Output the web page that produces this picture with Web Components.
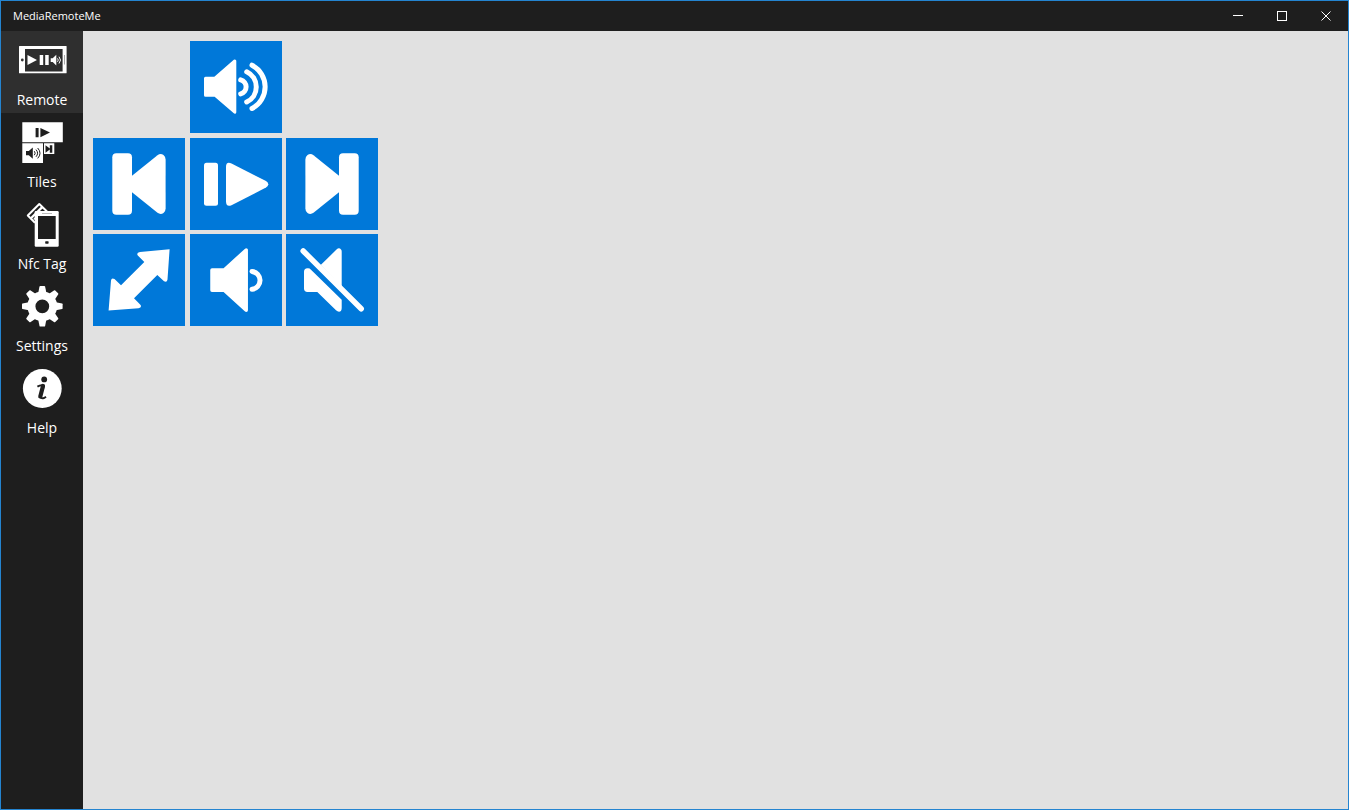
<!DOCTYPE html>
<html lang="en">
<head>
<meta charset="utf-8">
<meta name="viewport" content="width=device-width, initial-scale=1">
<title>MediaRemoteMe</title>
<style>
  html, body { margin: 0; height: 100%; }
  body { font-family: "Open Sans", "Noto Sans", sans-serif; background: #e1e1e1; }
</style>
</head>
<body>
<media-app></media-app>

<script>
const ICONS = {
  // navigation icons, 50 x 48
  remote: `<rect x="2" y="10" width="47.600" height="27.300" rx=".6" fill="#fff"/><rect x="8" y="13" width="37.600" height="22.500" fill="#2d2d2d"/>
    <circle cx="5.300" cy="24" r="1.400" fill="#333"/><path d="M47.500 19v9.500" stroke="#aaa"/>
    <path d="M10.500 19l9.500 5-9.500 5zM22.700 19h3.500v10h-3.500zM28.200 19h3.500v10h-3.500zM33.700 22.200h2l3.600-3.400v10.600l-3.600-3.500h-2z" fill="#fff"/>
    <path d="M40.500 22.400q1.500 1.600 0 3.400M42 20.700q3 3.300 0 6.800" stroke="#fff" fill="none"/>`,
  tiles: `<path d="M5.300 4.300h40.500v20H5.300zM5.300 25.300H26V45H5.300zM27 25.300h10.300V36H27z" fill="#fff"/>
    <path d="M18.600 10h3v9.300h-3zM23.400 10l9.600 4.600-9.600 4.700zM9 33h2.800l4-3.500v11.200l-4-3.500H9zM28.500 27.200l4.300 3.200v-3.200h2.500v7.600h-2.500v-3.200l-4.300 3.200z" fill="#1e1e1e"/>
    <path d="M17.300 33.200q1.800 2 0 4M19 31.600q3.200 3.600 0 7.200M20.700 30q4.600 5.200 0 10.400" stroke="#1e1e1e" fill="none"/>`,
  nfc: `<g fill="none" stroke="#fff"><path d="M18 22.700L10.800 15.500L22.300 4L30 11.500" stroke-width="2" stroke-linejoin="round"/><path d="M14.200 18L25.500 6.900" stroke-width="2.400"/><path d="M16.700 19.400l2-2" stroke-width="1.400"/></g>
    <rect x="17.700" y="11" width="24" height="35.700" rx="1.200" fill="#fff"/><rect x="21" y="16" width="17.700" height="23" fill="#1e1e1e"/>
    <path d="M25 13.500h10" stroke="#bbb"/><rect x="28.200" y="41.200" width="3.400" height="2.500" rx=".6" fill="#1e1e1e"/>`,
  settings: `<defs><path id="tooth" d="M21 12L22.500 4.500Q22.700 4 23.300 4h4q.6 0 .8.500L29.600 12z"/></defs>
    <g fill="#fff"><use href="#tooth"/><use href="#tooth" transform="rotate(45 25.300 24.300)"/><use href="#tooth" transform="rotate(90 25.300 24.300)"/><use href="#tooth" transform="rotate(135 25.300 24.300)"/>
    <use href="#tooth" transform="rotate(180 25.300 24.300)"/><use href="#tooth" transform="rotate(225 25.300 24.300)"/><use href="#tooth" transform="rotate(270 25.300 24.300)"/><use href="#tooth" transform="rotate(315 25.300 24.300)"/></g>
    <circle cx="25.300" cy="24.300" r="10.900" fill="none" stroke="#fff" stroke-width="8"/>`,
  // the info mark: a dot over a slanted stem with curled ends
  help: `<circle cx="25.300" cy="24.500" r="19.400" fill="#fff"/><circle cx="27.200" cy="15.400" r="2.900" fill="#1e1e1e"/>
    <path d="M20.400 22.600Q23.500 20.700 26.600 21.400Q26.700 23.500 25.400 26.500Q23.400 31.500 24.200 33.600Q25.500 35.400 29 32.800" fill="none" stroke="#1e1e1e" stroke-width="2"/>
    <path d="M26 22L23.300 32.500" stroke="#1e1e1e" stroke-width="4.200" stroke-linecap="round"/>`,
  // remote control icons, 92 x 92
  volumeUp: `<path d="M15.500 37.200H25L44.800 20V71.200L25 54.200H15.500z" fill="#fff" stroke="#fff" stroke-width="3" stroke-linejoin="round"/>
    <g fill="none" stroke="#fff" stroke-width="5" stroke-linecap="round"><path d="M50.700 38.800A7.300 7.300 0 0 1 50.700 52.900"/><path d="M56.700 30.800A16.700 16.700 0 0 1 56.700 61"/><path d="M62 24.200A24.400 24.400 0 0 1 62 67.500"/></g>`,
  previous: `<rect x="19.300" y="15.300" width="19.700" height="61.400" rx="4" fill="#fff"/>
    <path d="M39 37.700L64.500 17.200Q67.500 15 70.500 17Q72.600 18.700 72.600 21.500V70.500Q72.600 73.500 70.500 75Q67.500 77 64.500 74.800L39 54.300z" fill="#fff"/>`,
  playPause: `<rect x="14" y="24.700" width="14" height="43" rx="2.500" fill="#fff"/>
    <path d="M36 29Q36 23.200 41.500 25.500L76 43Q80.600 46.200 76 49.500L41.500 67.200Q36 69.200 36 63.500z" fill="#fff"/>`,
  next: `<rect x="53" y="15.300" width="19.700" height="61.400" rx="4" fill="#fff"/>
    <path d="M53 37.700L27.500 17.200Q24.500 15 21.500 17Q19.400 18.700 19.400 21.500V70.500Q19.400 73.500 21.500 75Q24.500 77 27.500 74.800L53 54.300z" fill="#fff"/>`,
  fullscreen: `<path d="M76.600 15.300L47 18Q43 18.500 44.800 21.500L51.300 28L28 51.300L21.500 45Q18.500 43.300 18 46.500L15.600 76.600L45.500 74.300Q49 73.700 47.600 71L41 64.300L64.300 41L71 47.300Q74 48.800 74.500 45.500z" fill="#fff"/>`,
  volumeDown: `<path d="M22 36H34.200L56.200 16V76.300L34.200 56.300H22z" fill="#fff" stroke="#fff" stroke-width="3.500" stroke-linejoin="round"/>
    <path d="M62 37.400A9 9 0 0 1 62 55.300" fill="none" stroke="#fff" stroke-width="5" stroke-linecap="round"/>`,
  mute: `<path d="M17.200 17L75.200 74.800" stroke="#fff" stroke-width="5.500" stroke-linecap="round"/>
    <path d="M34.700 31L50.500 15.600Q53 13.200 55 15.400Q55.700 16 55.700 17.500V53zM18 38Q18 34.300 21.500 34.300Q23.500 34 25 35.700L55.700 65.700V74Q55.700 77.500 53 77.700Q51.500 77.700 50 76.300L31.300 57.900H21.500Q18 57.900 18 54.500z" fill="#fff"/>`,
  // caption icons, 12 x 12
  minimize: `<path d="M1 5.500h10" stroke="#fff"/>`,
  maximize: `<rect x="1.500" y="1.500" width="9" height="9" fill="none" stroke="#fff"/>`,
  close: `<path d="M1.500 1.500l9 9M10.500 1.500l-9 9" stroke="#fff"/>`
};

const svg = (name, w, h) =>
  `<svg width="${w}" height="${h}" viewBox="0 0 ${w} ${h}" aria-hidden="true">${ICONS[name]}</svg>`;

const base = `* { box-sizing: border-box; }
  button { margin: 0; padding: 0; border: 0; font: inherit; color: inherit; background: none; cursor: pointer; }
  svg { display: block; }`;

class WindowTitle extends HTMLElement {
  connectedCallback() {
    this.attachShadow({ mode: 'open' }).innerHTML = `<style>${base}
      :host { display: flex; align-items: stretch; justify-content: space-between; height: 30px; background: #1e1e1e; color: #fff; }
      h1 { margin: 0; padding-left: 12px; font-size: 11px; line-height: 30px; font-weight: 400; }
      .controls { display: flex; }
      button { width: 44px; display: grid; place-items: center; }
      button:hover { background: #333; }
    </style><h1><slot></slot></h1>
    <div class="controls">
      <button aria-label="Minimize">${svg('minimize', 12, 12)}</button>
      <button aria-label="Maximize">${svg('maximize', 12, 12)}</button>
      <button aria-label="Close">${svg('close', 12, 12)}</button>
    </div>`;
  }
}

class NavItem extends HTMLElement {
  connectedCallback() {
    this.attachShadow({ mode: 'open' }).innerHTML = `<style>${base}
      :host { display: block; }
      :host([selected]) { background: #2f2f2f; }
      button { display: flex; flex-direction: column; align-items: center; gap: 6px; width: 100%; height: 82px; padding-top: 5px; font-size: 14px; line-height: 20px; color: #fff; }
    </style><button${this.hasAttribute('selected') ? ' aria-current="page"' : ''}>${svg(this.getAttribute('icon'), 50, 48)}<span><slot></slot></span></button>`;
  }
}

class RemoteTile extends HTMLElement {
  connectedCallback() {
    this.attachShadow({ mode: 'open' }).innerHTML = `<style>${base}
      :host { display: block; width: 92px; height: 92px; }
      button { display: block; background: #0078d9; }
      button:hover { background: #1a86dd; }
    </style><button aria-label="${this.getAttribute('label')}">${svg(this.getAttribute('icon'), 92, 92)}</button>`;
  }
}

class RemotePad extends HTMLElement {
  connectedCallback() {
    this.attachShadow({ mode: 'open' }).innerHTML = `<style>
      :host { display: grid; grid-template-columns: repeat(3, 92px); width: 285px; height: 285px; justify-content: space-between; align-content: space-between; }
      .top { grid-column: 2; }
      .first { grid-column: 1; }
    </style>
    <remote-tile class="top" icon="volumeUp" label="Volume up"></remote-tile>
    <remote-tile class="first" icon="previous" label="Previous"></remote-tile>
    <remote-tile icon="playPause" label="Play or pause"></remote-tile>
    <remote-tile icon="next" label="Next"></remote-tile>
    <remote-tile icon="fullscreen" label="Full screen"></remote-tile>
    <remote-tile icon="volumeDown" label="Volume down"></remote-tile>
    <remote-tile icon="mute" label="Mute"></remote-tile>`;
  }
}

class MediaApp extends HTMLElement {
  connectedCallback() {
    this.attachShadow({ mode: 'open' }).innerHTML = `<style>
      :host { display: flex; flex-direction: column; box-sizing: border-box; min-height: 100vh; border: 1px solid #2484d0; }
      .body { display: flex; flex: 1; }
      nav { flex: none; width: 82px; background: #1e1e1e; }
      main { flex: 1; padding: 10px; background: #e1e1e1; }
    </style>
    <window-title>MediaRemoteMe</window-title>
    <div class="body">
      <nav aria-label="Main">
        <nav-item icon="remote" selected>Remote</nav-item>
        <nav-item icon="tiles">Tiles</nav-item>
        <nav-item icon="nfc">Nfc Tag</nav-item>
        <nav-item icon="settings">Settings</nav-item>
        <nav-item icon="help">Help</nav-item>
      </nav>
      <main><remote-pad></remote-pad></main>
    </div>`;
  }
}

customElements.define('window-title', WindowTitle);
customElements.define('nav-item', NavItem);
customElements.define('remote-tile', RemoteTile);
customElements.define('remote-pad', RemotePad);
customElements.define('media-app', MediaApp);
</script>
</body>
</html>
